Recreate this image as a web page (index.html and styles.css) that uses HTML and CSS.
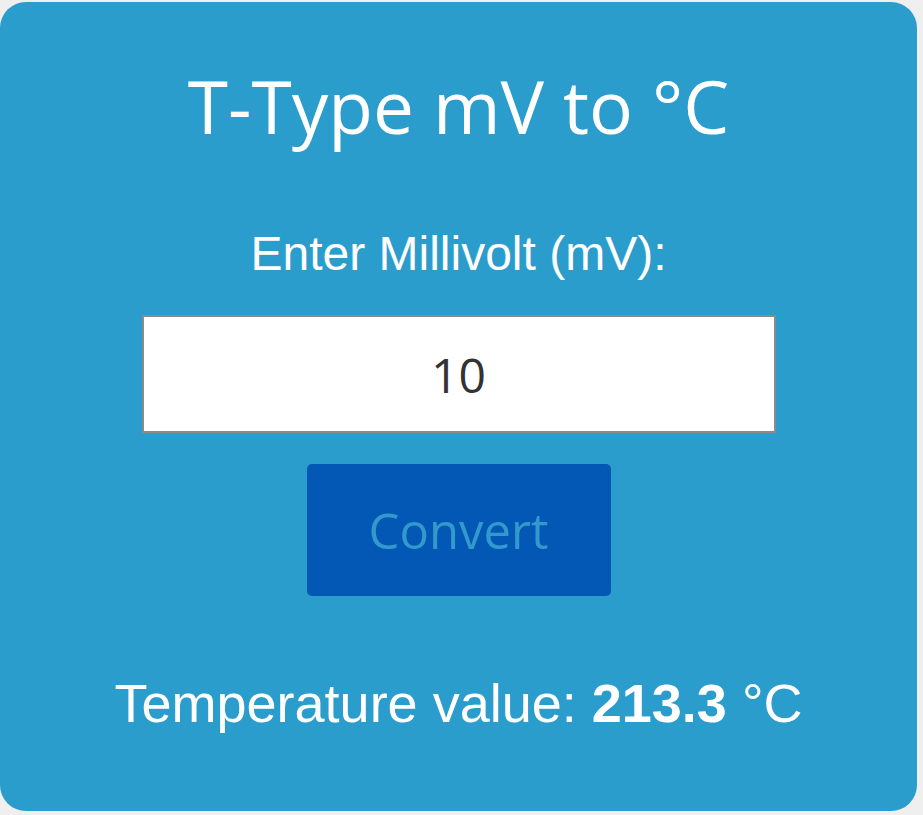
FILE: index.html
```html
<!DOCTYPE html>
<html lang="en">
<head>
    <meta charset="UTF-8">
    <meta name="viewport" content="width=device-width, initial-scale=1.0">
    <title>T-Type mV to °C</title>
    <link rel="stylesheet" href="styles.css">
</head>
<body>
    <div class="converter">
        <h1>T-Type mV to °C</h1>

        <label for="millivolt">Enter Millivolt (mV):</label>
        <input type="text" id="millivolt" name="millivolt" value="10">

        <button onclick="convert()">Convert</button>

        <div class="result">Temperature value: <span class="bold" id="temp">213.3</span> °C</div>
    </div>

    <script>
        function convert() {
            var mv = parseFloat(document.getElementById('millivolt').value);
            if (isNaN(mv)) {
                return;
            }
            // rough linear fit for the T-type range
            var temp = mv * 21.33;
            document.getElementById('temp').textContent = temp.toFixed(1);
        }
    </script>
</body>
</html>
```

FILE: styles.css
```css
body {
    margin: 0;
    background-color: #efefef;
    font-family: "Liberation Sans", Arial, sans-serif;
}
.converter {
    box-sizing: border-box;
    width: 917px;
    height: 809px;
    margin-top: 2px;
    padding-top: 61px;
    background-color: #2b9dcc;
    border-radius: 26px;
    display: flex;
    flex-direction: column;
    align-items: center;
    color: white;
}
h1 {
    margin: 0;
    font-family: "Open Sans", sans-serif;
    font-weight: normal;
    font-size: 73px;
    line-height: 86px;
}
label {
    margin-top: 79px;
    font-size: 48px;
    line-height: 52px;
}
input {
    box-sizing: border-box;
    width: 634px;
    height: 118px;
    margin-top: 35px;
    border: 2px solid #8a8a8a;
    background-color: white;
    text-align: center;
    font-family: "Open Sans", sans-serif;
    font-size: 48px;
    color: #333;
}
button {
    width: 304px;
    height: 132px;
    margin-top: 31px;
    border: none;
    border-radius: 5px;
    background-color: #0258b4;
    color: #3399cc;
    font-family: "Open Sans", sans-serif;
    font-size: 49px;
    cursor: pointer;
}
.result {
    margin-top: 75px;
    font-size: 54px;
    line-height: 64px;
}
.bold {
    font-weight: bold;
}
```
